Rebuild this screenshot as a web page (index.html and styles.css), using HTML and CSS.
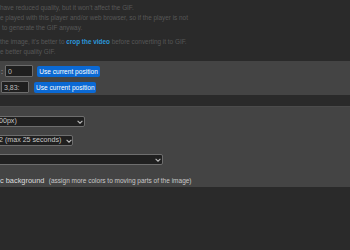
FILE: index.html
```html
<!DOCTYPE html>
<html lang="en">
<head>
    <meta charset="UTF-8">
    <meta name="viewport" content="width=device-width, initial-scale=1.0">
    <title>Video to GIF</title>
    <link rel="stylesheet" href="styles.css">
</head>
<body>
    <div class="notes">
        <p>have reduced quality, but it won't affect the GIF.<br>
        e played with this player and/or web browser, so if the player is not<br>
        <span class="indent">to generate the GIF anyway.</span></p>
        <p>the image, it's better to <a href="#">crop the video</a> before converting it to GIF.<br>
        e better quality GIF.</p>
    </div>

    <div class="panel times">
        <div class="row start">
            <label class="cut">:</label>
            <input type="text" class="field" value="0">
            <button class="btn">Use current position</button>
        </div>
        <div class="row end">
            <input type="text" class="field" value="3,83:">
            <button class="btn">Use current position</button>
        </div>
    </div>

    <div class="panel options">
        <div class="pick size">
            <select><option>00px)</option></select>
            <svg class="chev" viewBox="0 0 10 6" width="6" height="4"><path d="M1 1l4 4 4-4" fill="none" stroke="#bbb" stroke-width="1.8"/></svg>
        </div>
        <div class="pick fps">
            <select><option>2 (max 25 seconds)</option></select>
            <svg class="chev" viewBox="0 0 10 6" width="6" height="4"><path d="M1 1l4 4 4-4" fill="none" stroke="#bbb" stroke-width="1.8"/></svg>
        </div>
        <div class="pick method">
            <select><option></option></select>
            <svg class="chev" viewBox="0 0 10 6" width="6" height="4"><path d="M1 1l4 4 4-4" fill="none" stroke="#bbb" stroke-width="1.8"/></svg>
        </div>
        <p class="check"><strong>c background</strong> <small>(assign more colors to moving parts of the image)</small></p>
    </div>
</body>
</html>
```

FILE: styles.css
```css
body { margin: 0; background: #2a2a2a; font-family: "Liberation Sans", Arial, sans-serif; overflow: hidden; }
.notes { padding-top: 3px; }
.notes p { margin: 0 0 4px; font-size: 6.4px; line-height: 10px; color: #575757; white-space: nowrap; }
.notes .indent { margin-left: 2px; }
.notes a { color: #2a98dc; font-weight: bold; text-decoration: none; }

.panel { background: #444; }
.times { margin-top: 3px; padding: 4px 0 2px; display: flex; flex-direction: column; gap: 4px; }
.row { display: flex; align-items: center; height: 12px; }
.row .cut { color: #bbb; font-size: 7px; width: 4px; margin-left: 1px; }
.row.end { padding-left: 1px; }
.field { box-sizing: border-box; width: 28px; height: 12px; margin: 0; padding: 0 2px; background: #1f1f1f; border: 1px solid #6c6c6c; border-radius: 1px; color: #bbb; font: 7px "Liberation Sans", Arial, sans-serif; }
.btn { box-sizing: border-box; height: 11px; margin-left: 4px; padding: 0 2px; background: #0b69d4; border: 0; border-radius: 2px; color: #fff; font: 6.6px "Liberation Sans", Arial, sans-serif; white-space: nowrap; }
.row.start .btn { width: 63px; }
.row.end .btn { width: 62px; margin-left: 5px; }

.options { margin-top: 11px; padding: 9px 0 4px; border-top: 1px solid #4b4b4b; }
.pick { position: relative; height: 11px; margin-bottom: 8px; }
.pick select { display: block; box-sizing: border-box; height: 11px; margin: 0; padding: 0 0 0 1px; appearance: none; background: #202020; border: 1px solid #6e6e6e; border-radius: 2px; color: #c8c8c8; font: 7.1px/9px "Liberation Sans", Arial, sans-serif; }
.pick .chev { position: absolute; top: 4px; }
.size select { width: 88px; margin-left: -3px; }
.size .chev { left: 77px; }
.fps select { width: 76px; margin-left: -3px; }
.fps .chev { left: 66px; }
.method select { width: 166px; margin-left: -3px; }
.method .chev { left: 155px; }
.check { margin: 0; height: 10px; line-height: 10px; color: #ddd; white-space: nowrap; }
.check strong { font-weight: normal; font-size: 7.4px; }
.check small { font-size: 6.5px; color: #c8c8c8; }
```
